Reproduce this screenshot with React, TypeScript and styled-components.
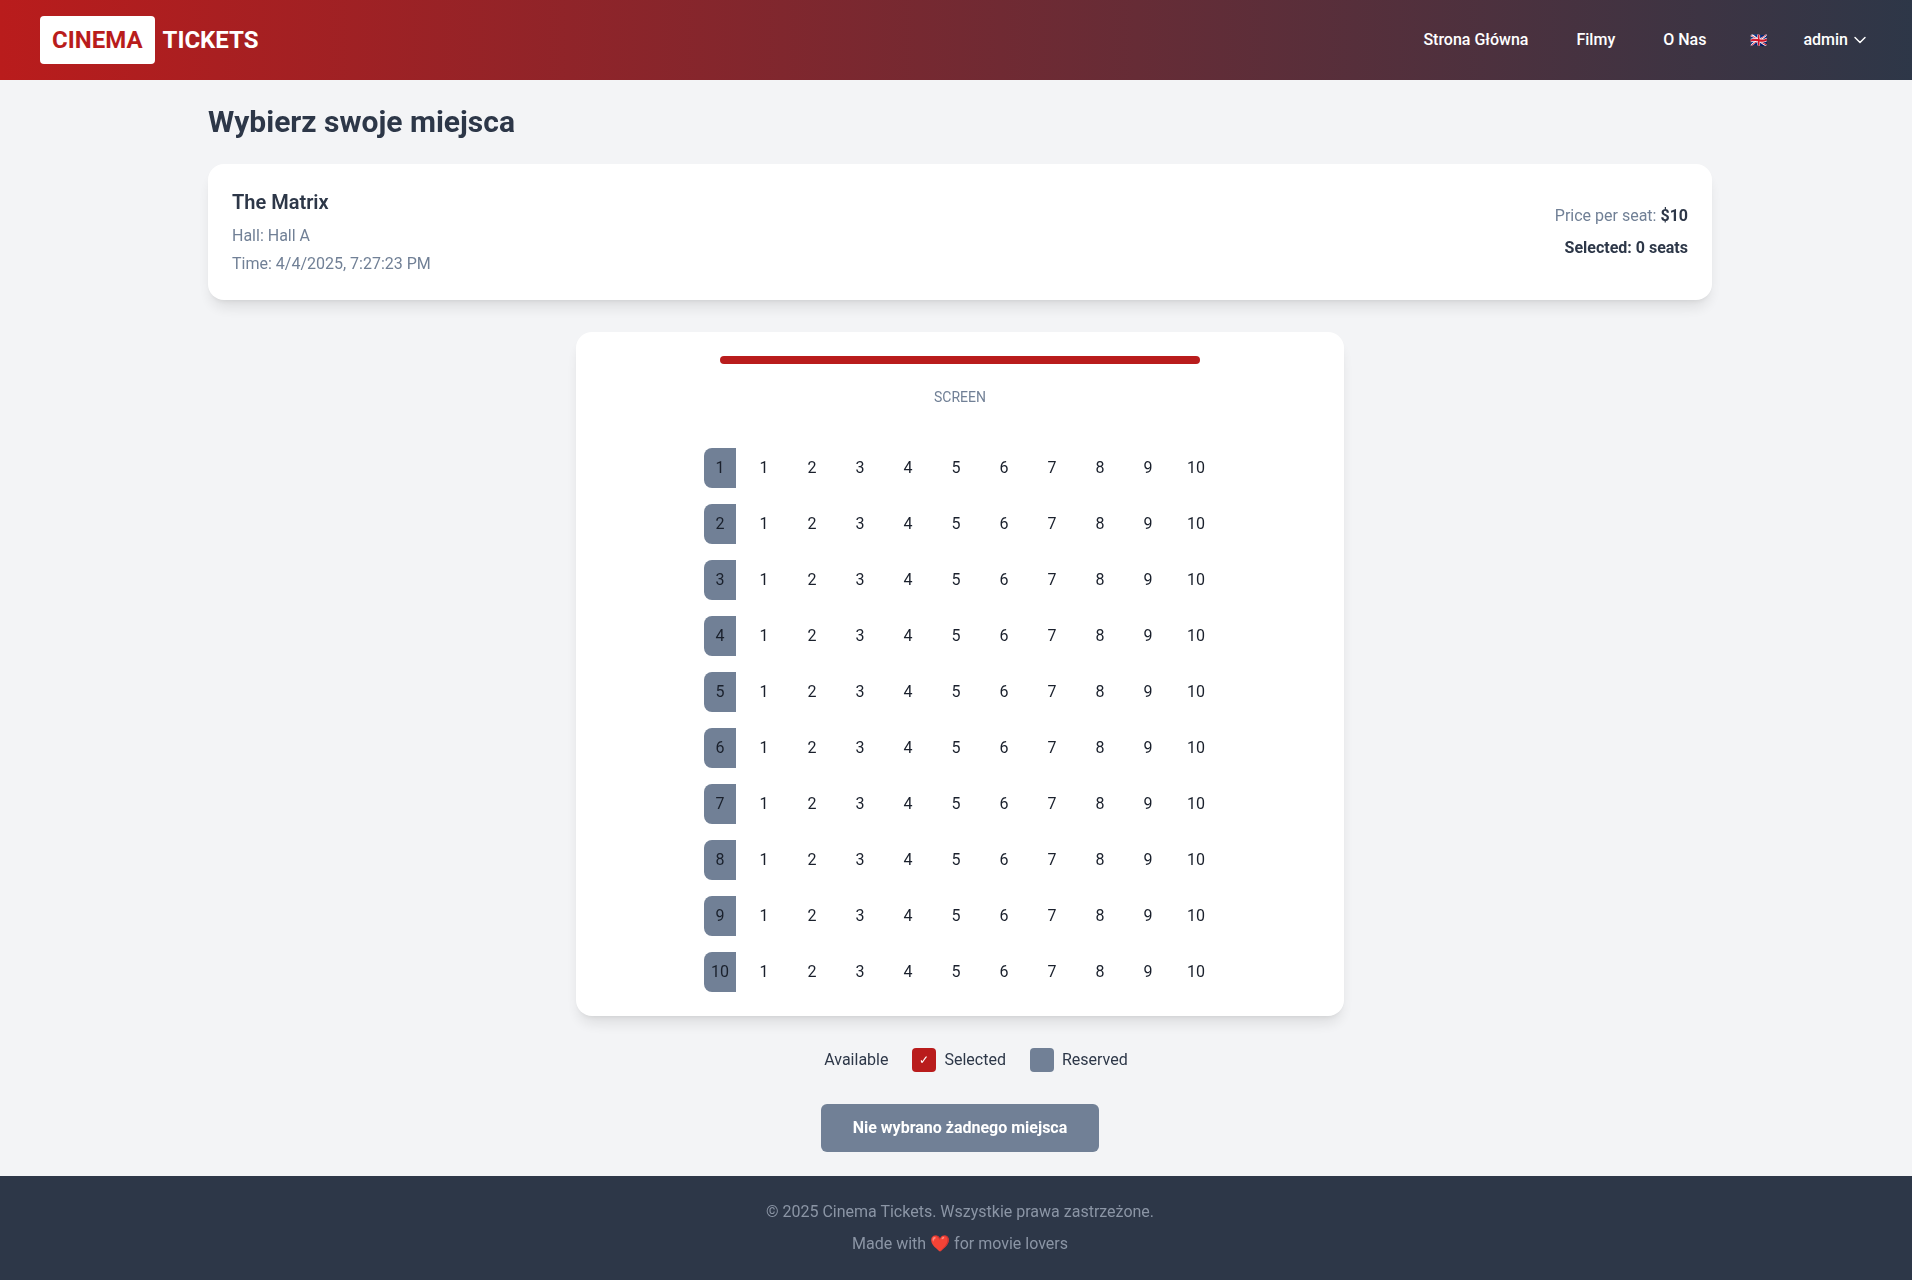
import React, {FC} from 'react';
import styled, {createGlobalStyle} from 'styled-components';
import {ChevronDown} from 'lucide-react';

const rows = [1, 2, 3, 4, 5, 6, 7, 8, 9, 10];

const GlobalStyle = createGlobalStyle`
  * {
    box-sizing: border-box;
  }
  html, body {
    margin: 0;
    overflow: hidden;
    background: #f3f4f6;
  }
  body {
    font-family: Roboto, "Liberation Sans", sans-serif;
    color: #2d3748;
    font-size: 16px;
    line-height: 24px;
  }
`;

// the page was laid out 1920 wide and clipped by the window
// the opacity gives grayscale text, as in the reference
const Page = styled.div`
  width: 1920px;
  min-height: 1280px;
  display: flex;
  flex-direction: column;
  opacity: 0.999;
`;

const Header = styled.header`
  height: 80px;
  padding: 0 40px;
  display: flex;
  align-items: center;
  justify-content: space-between;
  background: linear-gradient(90deg, #b91c1c, #2d3748);
  color: white;
`;

const Logo = styled.div`
  display: flex;
  align-items: center;
  gap: 8px;
  font-size: 24px;
  line-height: 32px;
  font-weight: 700;
`;

const LogoBox = styled.span`
  background: white;
  color: #b91c1c;
  padding: 8px 12px;
  border-radius: 4px;
`;

const Nav = styled.nav`
  display: flex;
  align-items: center;
  padding-right: 10px;
  font-weight: 500;
`;

const NavLinks = styled.div`
  display: flex;
  gap: 48px;
  margin-right: 42px;
`;

const Flag = styled.span`
  width: 20px;
  margin-right: 35px;
  font-size: 14px;
  text-align: center;
`;

const UserMenu = styled.div`
  display: flex;
  align-items: center;
  gap: 2px;
`;

const Main = styled.main`
  width: 1536px;
  margin: 0 auto;
  padding: 24px 16px;
  flex: 1;
`;

const Title = styled.h1`
  margin: 0 0 24px;
  font-size: 30px;
  line-height: 36px;
  font-weight: 700;
`;

const InfoCard = styled.section`
  display: flex;
  align-items: center;
  justify-content: space-between;
  padding: 24px;
  background: white;
  border-radius: 16px;
  box-shadow: 0 10px 15px -3px rgba(0, 0, 0, 0.1), 0 4px 6px -4px rgba(0, 0, 0, 0.1);
  margin-bottom: 32px;
`;

const MovieTitle = styled.h2`
  margin: 0 0 8px;
  font-size: 20px;
  line-height: 28px;
  font-weight: 600;
`;

const Muted = styled.p`
  margin: 0 0 4px;
  color: #718096;
  &:last-child {
    margin-bottom: 0;
  }
`;

const Summary = styled.div`
  text-align: right;
`;

const Price = styled.p`
  margin: 0 0 8px;
  color: #718096;
  strong {
    color: #2d3748;
    font-weight: 700;
  }
`;

const Selected = styled.p`
  margin: 0;
  font-weight: 700;
`;

const HallCard = styled.section`
  width: 768px;
  margin: 0 auto 32px;
  padding: 24px;
  background: white;
  border-radius: 16px;
  box-shadow: 0 10px 15px -3px rgba(0, 0, 0, 0.1), 0 4px 6px -4px rgba(0, 0, 0, 0.1);
`;

const ScreenBar = styled.div`
  width: 480px;
  height: 8px;
  margin: 0 auto 23px;
  background: #b91c1c;
  border-radius: 4px;
`;

const ScreenLabel = styled.div`
  margin-bottom: 41px;
  text-align: center;
  font-size: 14px;
  line-height: 20px;
  color: #718096;
`;

const SeatRows = styled.div`
  display: flex;
  flex-direction: column;
  gap: 16px;
`;

const SeatRow = styled.div`
  display: flex;
  justify-content: center;
  gap: 8px;
`;

const RowLabel = styled.div`
  width: 32px;
  height: 40px;
  display: flex;
  align-items: center;
  justify-content: center;
  background: #718096;
  color: #1a202c;
  border-radius: 8px 0 0 8px;
`;

const Seat = styled.button`
  width: 40px;
  height: 40px;
  padding: 0;
  border: none;
  background: transparent;
  color: #1a202c;
  font: inherit;
`;

const Legend = styled.div`
  display: flex;
  justify-content: center;
  gap: 24px;
  margin-bottom: 32px;
`;

const LegendItem = styled.div`
  display: flex;
  align-items: center;
  gap: 8px;
`;

const Swatch = styled.span<{$color?: string}>`
  width: 24px;
  height: 24px;
  display: flex;
  align-items: center;
  justify-content: center;
  border-radius: 4px;
  background: ${(props) => props.$color || 'transparent'};
  color: white;
  font-size: 12px;
`;

const Action = styled.div`
  display: flex;
  justify-content: center;
`;

const ConfirmButton = styled.button`
  height: 48px;
  padding: 0 32px;
  border: none;
  border-radius: 6px;
  background: #718096;
  color: white;
  font: inherit;
  font-weight: 700;
`;

const Footer = styled.footer`
  height: 104px;
  padding: 24px;
  background: #2d3748;
  text-align: center;
`;

const FooterLine = styled.p`
  margin: 0 0 8px;
  color: #8b95a5;
`;

const App: FC = () => (
  <Page>
    <GlobalStyle />
    <Header>
      <Logo>
        <LogoBox>CINEMA</LogoBox>
        <span>TICKETS</span>
      </Logo>
      <Nav>
        <NavLinks>
          <span>Strona Główna</span>
          <span>Filmy</span>
          <span>O Nas</span>
        </NavLinks>
        <Flag>🇬🇧</Flag>
        <UserMenu>
          admin
          <ChevronDown size={20} strokeWidth={1.75} />
        </UserMenu>
      </Nav>
    </Header>
    <Main>
      <Title>Wybierz swoje miejsca</Title>
      <InfoCard>
        <div>
          <MovieTitle>The Matrix</MovieTitle>
          <Muted>Hall: Hall A</Muted>
          <Muted>Time: 4/4/2025, 7:27:23 PM</Muted>
        </div>
        <Summary>
          <Price>
            Price per seat: <strong>$10</strong>
          </Price>
          <Selected>Selected: 0 seats</Selected>
        </Summary>
      </InfoCard>
      <HallCard>
        <ScreenBar />
        <ScreenLabel>SCREEN</ScreenLabel>
        <SeatRows>
          {rows.map((row) => (
            <SeatRow key={row}>
              <RowLabel>{row}</RowLabel>
              {rows.map((seat) => (
                <Seat key={seat}>{seat}</Seat>
              ))}
            </SeatRow>
          ))}
        </SeatRows>
      </HallCard>
      <Legend>
        <LegendItem>
          <Swatch />
          Available
        </LegendItem>
        <LegendItem>
          <Swatch $color="#b91c1c">✓</Swatch>
          Selected
        </LegendItem>
        <LegendItem>
          <Swatch $color="#718096" />
          Reserved
        </LegendItem>
      </Legend>
      <Action>
        <ConfirmButton>Nie wybrano żadnego miejsca</ConfirmButton>
      </Action>
    </Main>
    <Footer>
      <FooterLine>© 2025 Cinema Tickets. Wszystkie prawa zastrzeżone.</FooterLine>
      <FooterLine>Made with ❤️ for movie lovers</FooterLine>
    </Footer>
  </Page>
);

export default App;
